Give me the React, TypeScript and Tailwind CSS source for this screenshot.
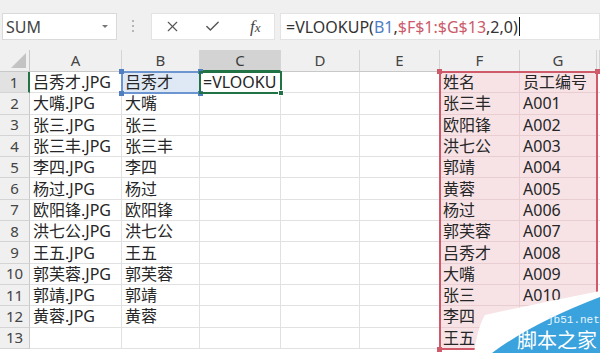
import React from "react";
import { X, Check } from "lucide-react";

const rows = [
  { a: "吕秀才.JPG", b: "吕秀才", f: "姓名", g: "员工编号" },
  { a: "大嘴.JPG", b: "大嘴", f: "张三丰", g: "A001" },
  { a: "张三.JPG", b: "张三", f: "欧阳锋", g: "A002" },
  { a: "张三丰.JPG", b: "张三丰", f: "洪七公", g: "A003" },
  { a: "李四.JPG", b: "李四", f: "郭靖", g: "A004" },
  { a: "杨过.JPG", b: "杨过", f: "黄蓉", g: "A005" },
  { a: "欧阳锋.JPG", b: "欧阳锋", f: "杨过", g: "A006" },
  { a: "洪七公.JPG", b: "洪七公", f: "郭芙蓉", g: "A007" },
  { a: "王五.JPG", b: "王五", f: "吕秀才", g: "A008" },
  { a: "郭芙蓉.JPG", b: "郭芙蓉", f: "大嘴", g: "A009" },
  { a: "郭靖.JPG", b: "郭靖", f: "张三", g: "A010" },
  // G12/G13 sit under the watermark
  { a: "黄蓉.JPG", b: "黄蓉", f: "李四", g: "" },
  { a: "", b: "", f: "王五", g: "" },
];

const letters = ["A", "B", "C", "D", "E", "F", "G", ""];
const gridCols = "grid grid-cols-[30px_92px_78px_81px_79px_80px_80px_77px_1fr]";

const Cell = ({ text, tone }: { text?: string; tone?: "pink" | "blue" }) => (
  <div
    className={`flex items-center pl-[3px] border-r border-b whitespace-nowrap overflow-hidden text-[16px] leading-none text-[#262626] ${
      tone === "pink"
        ? "bg-[#f7e3e6] border-[#e8cdd1]"
        : tone === "blue"
        ? "bg-[#dfe8f5] border-[#e1e1e1]"
        : "bg-white border-[#e1e1e1]"
    }`}
  >
    {text}
  </div>
);

const Handle = ({ className }: { className: string }) => (
  <span className={`absolute w-[5px] h-[5px] ${className}`} />
);

export default function App() {
  return (
    <div className="relative w-[600px] h-[353px] overflow-hidden bg-white font-['Noto_Sans','Noto_Sans_CJK_SC',sans-serif]">
      {/* formula bar */}
      <div className="h-[50px] bg-[#f0f0f0] flex items-start pt-[13px]">
        <div className="ml-[2px] w-[115px] h-[27px] bg-white border border-[#d9d9d9] flex items-center justify-between pl-[3px] pr-[8px]">
          <span className="text-[16px] leading-none text-[#444]">SUM</span>
          <span className="w-0 h-0 border-l-[3px] border-r-[3px] border-t-[3px] border-l-transparent border-r-transparent border-t-[#777]" />
        </div>
        <div className="ml-[15px] mt-[7px] flex flex-col gap-[3px]">
          <span className="w-[2px] h-[2px] bg-[#b5b5b5]" />
          <span className="w-[2px] h-[2px] bg-[#b5b5b5]" />
          <span className="w-[2px] h-[2px] bg-[#b5b5b5]" />
        </div>
        <div className="ml-[17px] w-[124px] h-[27px] bg-white border border-[#e3e3e3] flex items-center">
          <X size={17} strokeWidth={1.6} className="ml-[12px] text-[#555]" />
          <Check size={17} strokeWidth={2} className="ml-[23px] text-[#555]" />
          <span className="ml-[29px] font-['Liberation_Serif',serif] italic text-[17px] leading-none text-[#444]">
            f<span className="text-[13px]">x</span>
          </span>
        </div>
        <div className="ml-[5px] flex-1 h-[27px] bg-white border border-[#e3e3e3] flex items-center pl-[5px] text-[16px] leading-none whitespace-nowrap">
          <span className="text-[#333]">=VLOOKUP(</span>
          <span className="text-[#4f7fc1]">B1</span>
          <span className="text-[#333]">,</span>
          <span className="text-[#cb5a6a]">$F$1:$G$13</span>
          <span className="text-[#333]">,2,0)</span>
          <span className="ml-[1px] w-[1px] h-[19px] bg-[#111]" />
        </div>
      </div>

      {/* sheet */}
      <div className="relative">
        <div className={`${gridCols} h-[22px] bg-[#f0f0f0]`}>
          <div className="flex items-end justify-end pr-[3px] pb-[3px] border-r border-b border-[#c8c8c8]">
            <svg width="15" height="15" viewBox="0 0 15 15">
              <path d="M15,0 L15,15 L0,15 Z" fill="#c3c3c3" />
            </svg>
          </div>
          {letters.map((l, i) => (
            <div
              key={i}
              className={`flex items-center justify-center text-[15px] leading-none border-r border-[#d4d4d4] ${
                l === "C"
                  ? "bg-[#d3d3d3] text-[#3a3a3a] border-b-2 border-b-[#217346]"
                  : "text-[#444] border-b border-b-[#c8c8c8]"
              }`}
            >
              {l}
            </div>
          ))}
        </div>

        {rows.map((r, i) => (
          <div key={i} className={`${gridCols} h-[21.3px]`}>
            <div
              className={`flex items-center justify-center text-[15px] leading-none text-[#444] border-b border-[#d4d4d4] ${
                i === 0
                  ? "bg-[#e2e2e2] border-r-2 border-r-[#217346]"
                  : "bg-[#f0f0f0] border-r border-r-[#c8c8c8]"
              }`}
            >
              {i + 1}
            </div>
            <Cell text={r.a} />
            <Cell text={r.b} tone={i === 0 ? "blue" : undefined} />
            <Cell text={i === 0 ? "=VLOOKU" : ""} />
            <Cell />
            <Cell />
            <Cell text={r.f} tone="pink" />
            <Cell text={r.g} tone="pink" />
            <Cell />
          </div>
        ))}

        {/* B1 reference highlight */}
        <div className="absolute left-[121px] top-[21px] w-[80px] h-[23px] border-2 border-[#6d95cf]">
          <Handle className="-left-[4px] -top-[4px] bg-[#4f7fc1]" />
          <Handle className="-right-[4px] -top-[4px] bg-[#4f7fc1]" />
          <Handle className="-left-[4px] -bottom-[4px] bg-[#4f7fc1]" />
          <Handle className="-right-[4px] -bottom-[4px] bg-[#4f7fc1]" />
        </div>

        {/* F1:G13 reference highlight */}
        <div className="absolute left-[439px] top-[21px] w-[159px] h-[279px] border-2 border-[#cf5a6a]">
          <Handle className="-left-[4px] -top-[4px] bg-[#cf5a6a]" />
          <Handle className="-right-[4px] -top-[4px] bg-[#cf5a6a]" />
          <Handle className="-left-[4px] -bottom-[4px] bg-[#cf5a6a]" />
          <Handle className="-right-[4px] -bottom-[4px] bg-[#cf5a6a]" />
        </div>

        {/* active cell C1 */}
        <div className="absolute left-[199px] top-[21px] w-[83px] h-[23px] border-2 border-[#217346]">
          <span className="absolute -right-[4px] -bottom-[4px] w-[6px] h-[6px] bg-[#217346] border border-white" />
        </div>
      </div>

      {/* watermark */}
      <svg className="absolute left-[470px] top-[283px]" width="130" height="70" viewBox="0 0 130 70">
        <path d="M4,70 C7,50 11,38 15,32 Q70,20 130,8 L130,70 Z" fill="#ffffff" />
        <path d="M22,70 Q62,40 130,14 L130,70 Z" fill="#3aa2dc" />
      </svg>
      <span className="absolute left-[547px] top-[315px] font-['Liberation_Mono',monospace] text-[11px] leading-none text-[#e8f6fd]">
        jb51.net
      </span>
      <span className="absolute left-[517px] top-[330px] font-['Noto_Sans_CJK_SC',sans-serif] text-[20px] leading-none text-white">
        脚本之家
      </span>
    </div>
  );
}
